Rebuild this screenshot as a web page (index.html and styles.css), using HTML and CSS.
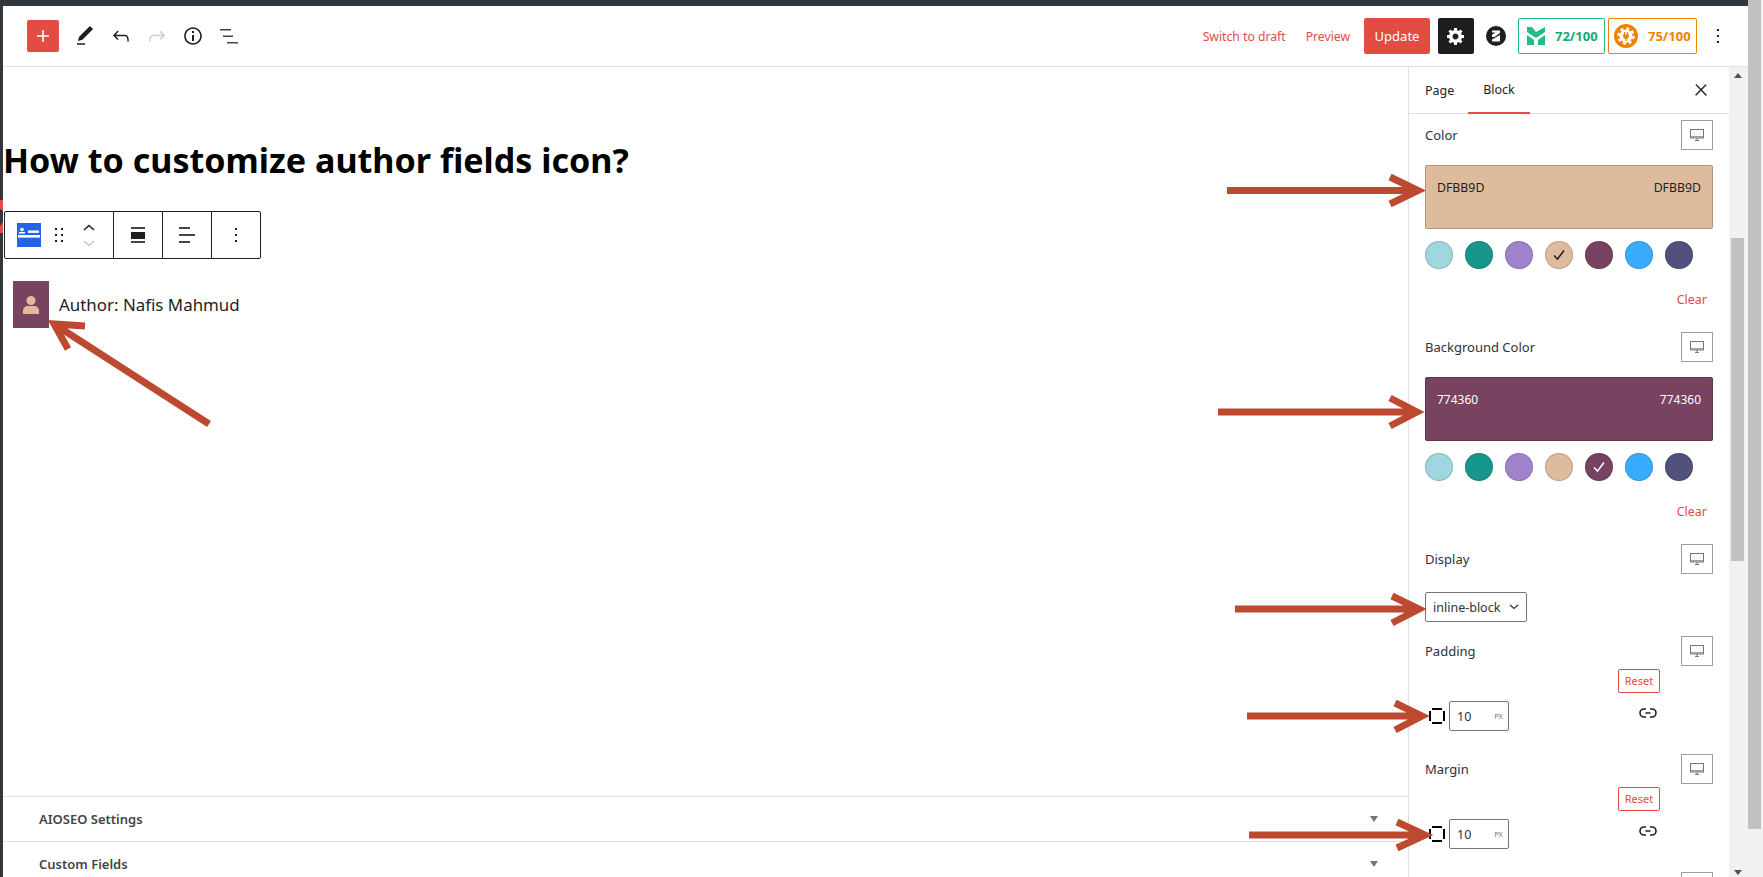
FILE: index.html
```html
<!DOCTYPE html>
<html lang="en-US">

<head>
    <meta charset="UTF-8">
    <meta name="viewport" content="width=device-width, initial-scale=1.0">
    <title>Edit Page</title>
    <link rel="stylesheet" href="styles.css">
</head>

<body>
    <div class="window">
        <!-- top bar -->
        <header class="topbar">
            <div class="tools">
                <button class="add-button">
                    <svg viewBox="0 0 24 24" width="24" height="24"><path d="M18 11.2h-5.2V6h-1.6v5.2H6v1.6h5.2V18h1.600v-5.200H18z" /></svg>
                </button>
                <span class="tool">
                    <svg viewBox="0 0 24 24" width="24" height="24"><path d="M20.1 5.1L16.9 2 6.2 12.7l-1.3 4.4 4.5-1.3L20.1 5.1zM4 20.8h8v-1.5H4v1.5z" /></svg>
                </span>
                <span class="tool">
                    <svg viewBox="0 0 24 24" width="24" height="24"><path d="M18.3 11.7c-.6-.6-1.4-.9-2.3-.9H6.7l2.9-3.3-1.1-1-4.5 5L8.5 16l1-1-2.7-2.7H16c.5 0 .9.2 1.3.5 1 1 1 3.4 1 4.5v.3h1.5v-.2c0-1.5 0-4.3-1.5-5.7z" /></svg>
                </span>
                <span class="tool tool-off">
                    <svg viewBox="0 0 24 24" width="24" height="24"><path d="M15.6 6.5l-1.1 1 2.9 3.3H8c-.9 0-1.7.3-2.3.9-1.4 1.5-1.4 4.2-1.4 5.6v.2h1.5v-.3c0-1.1 0-3.5 1-4.5.3-.3.7-.5 1.3-.5h9.2L14.5 15l1.1 1.1 4.6-4.6-4.6-5z" /></svg>
                </span>
                <span class="tool">
                    <svg viewBox="0 0 24 24" width="24" height="24"><path d="M12 3.2c-4.8 0-8.8 3.9-8.8 8.8 0 4.8 3.9 8.8 8.8 8.8 4.8 0 8.8-3.9 8.8-8.8 0-4.8-4-8.8-8.8-8.8zm0 16c-4 0-7.2-3.3-7.2-7.2C4.8 8 8 4.8 12 4.8s7.2 3.3 7.2 7.2c0 4-3.2 7.2-7.2 7.2zM11 17h2v-6h-2v6zm0-8h2V7h-2v2z" /></svg>
                </span>
                <span class="tool">
                    <svg viewBox="0 0 24 24" width="24" height="24"><path d="M3 5h11v1.5H3zM6 11.500h10v1.500H6zM10 18h11v1.500H10z" fill="#444" /></svg>
                </span>
            </div>
            <div class="actions">
                <a class="link-action">Switch to draft</a>
                <a class="link-action preview-link">Preview</a>
                <button class="update-button">Update</button>
                <button class="settings-button">
                    <svg viewBox="0 0 20 20" width="20" height="20"><path d="M18 12h-2.18c-.17.7-.44 1.35-.81 1.93l1.54 1.54-2.1 2.1-1.54-1.54c-.58.36-1.23.63-1.91.79V19H8v-2.18c-.68-.16-1.33-.43-1.91-.79l-1.54 1.54-2.12-2.12 1.54-1.54c-.36-.58-.63-1.23-.79-1.91H1V9.03h2.17c.16-.7.44-1.35.8-1.94L2.43 5.55l2.1-2.1 1.54 1.54c.58-.37 1.24-.64 1.93-.81V2h3v2.18c.68.16 1.33.43 1.91.79l1.54-1.54 2.12 2.12-1.54 1.54c.36.59.64 1.24.8 1.94H18V12zm-8.5 1.5c1.66 0 3-1.34 3-3s-1.34-3-3-3-3 1.34-3 3 1.34 3 3 3z" /></svg>
                </button>
                <span class="brand-logo">
                    <svg viewBox="0 0 20 20" width="20" height="20">
                        <circle cx="10" cy="10" r="10" fill="#1e1e1e" />
                        <path d="M6 4.500h8v2.500L8.500 11H6V8.800L9.500 6.500H6zM14 9v6.500H6v-2z" fill="#fff" />
                    </svg>
                </span>
                <div class="score score-green">
                    <svg viewBox="0 0 18 18" width="18" height="18">
                        <path d="M0 0h5l4 5 9-5v5l-9 6-9-6zM0 8l7 5v5H0zM18 8l-7 5v5h7z" fill="#22bd86" />
                    </svg>
                    <span>72/100</span>
                </div>
                <div class="score score-orange">
                    <svg viewBox="0 0 24 24" width="24" height="24">
                        <circle cx="12" cy="12" r="12" fill="#f18200" />
                        <circle cx="12" cy="12" r="6.500" fill="#fff" />
                        <circle cx="12" cy="12" r="7.500" fill="none" stroke="#fff" stroke-width="2.500" stroke-dasharray="3 2.890" />
                        <path d="M10 8h1.200v2.500h1.600V8H14v2.500h1v1.500a3 3 0 0 1-2.300 2.900V17h-1.400v-2.100A3 3 0 0 1 9 12v-1.500h1z" fill="#f18200" />
                    </svg>
                    <span>75/100</span>
                </div>
                <span class="more-icon">
                    <svg viewBox="0 0 24 24" width="24" height="24"><path d="M13 19h-2v-2h2v2zm0-6h-2v-2h2v2zm0-6h-2V5h2v2z" /></svg>
                </span>
            </div>
        </header>

        <div class="main">
            <!-- editor side -->
            <section class="editor">
                <h1 class="page-title">How to customize author fields icon?</h1>

                <div class="block-toolbar">
                    <div class="toolbar-group group-first">
                        <svg class="block-icon" viewBox="0 0 24 24" width="24" height="24">
                            <rect width="24" height="24" fill="#2563eb" />
                            <circle cx="5" cy="6.500" r="1.800" fill="#fff" />
                            <rect x="2" y="9" width="6" height="1.600" fill="#fff" />
                            <rect x="11" y="7.500" width="11" height="2.400" fill="#fff" />
                            <rect x="1" y="12" width="22" height="2.600" fill="#fff" />
                        </svg>
                        <svg class="drag-icon" viewBox="0 0 8 14" width="8" height="14">
                            <path d="M0 0h2v2H0zM6 0h2v2H6zM0 6h2v2H0zM6 6h2v2H6zM0 12h2v2H0zM6 12h2v2H6z" />
                        </svg>
                        <div class="mover">
                            <svg viewBox="0 0 12 7" width="12" height="7"><path d="M1 6l5-4.500L11 6" fill="none" stroke="#1e1e1e" stroke-width="1.500" /></svg>
                            <svg viewBox="0 0 12 7" width="12" height="7"><path d="M1 1l5 4.500L11 1" fill="none" stroke="#c4c4c4" stroke-width="1.500" /></svg>
                        </div>
                    </div>
                    <div class="toolbar-group">
                        <svg viewBox="0 0 24 24" width="24" height="24"><path d="M5 4h14v2H5zM5 18h14v2H5z" fill="#444" /><path d="M5 9h14v7H5z" /></svg>
                    </div>
                    <div class="toolbar-group">
                        <svg viewBox="0 0 24 24" width="24" height="24"><path d="M4 4h11v2H4zM4 11h16v2H4zM4 18h11v2H4z" fill="#444" /></svg>
                    </div>
                    <div class="toolbar-group">
                        <svg viewBox="0 0 24 24" width="24" height="24"><path d="M13 19h-2v-2h2v2zm0-6h-2v-2h2v2zm0-6h-2V5h2v2z" /></svg>
                    </div>
                </div>

                <div class="author-row">
                    <span class="author-icon">
                        <svg viewBox="0 0 16 18" width="16" height="18">
                            <circle cx="8" cy="4.500" r="4.500" fill="#dfbb9d" />
                            <path d="M0 18v-3c0-3 2-5 5-5h6c3 0 5 2 5 5v3z" fill="#dfbb9d" />
                        </svg>
                    </span>
                    <span class="author-text">Author: Nafis Mahmud</span>
                </div>

                <div class="meta-boxes">
                    <div class="meta-box"><span>AIOSEO Settings</span><i class="meta-arrow"></i></div>
                    <div class="meta-box"><span>Custom Fields</span><i class="meta-arrow"></i></div>
                </div>
            </section>

            <!-- settings side -->
            <aside class="sidebar">
                <div class="sidebar-panel">
                    <div class="tabs">
                        <span class="tab">Page</span>
                        <span class="tab tab-active">Block</span>
                        <svg class="close-icon" viewBox="0 0 24 24" width="18" height="18"><path d="M13 11.800l6.100-6.300-1-1-6.100 6.200-6.100-6.300-1 1 6.100 6.300-6.500 6.700 1 1 6.500-6.600 6.500 6.700 1-1z" /></svg>
                    </div>

                    <div class="fields">
                        <div class="field field-color">
                            <div class="field-head">
                                <label>Color</label>
                                <button class="device-button"><svg viewBox="0 0 14 14" width="14" height="14"><rect x=".5" y="1.500" width="13" height="8.500" fill="#fafafa" stroke="#777" /><path d="M0 8.800h14M5 12.500h4M7 10v2.500" stroke="#777" /></svg></button>
                            </div>
                            <div class="color-box box-sand"><span>DFBB9D</span><span>DFBB9D</span></div>
                            <div class="swatches">
                                <span class="swatch sw-sky"></span>
                                <span class="swatch sw-teal"></span>
                                <span class="swatch sw-violet"></span>
                                <span class="swatch sw-sand">
                                    <svg viewBox="0 0 14 14" width="14" height="14"><path d="M2 7.500l3.500 3.500L12 2.500" fill="none" stroke="#1e1e1e" stroke-width="1.500" /></svg>
                                </span>
                                <span class="swatch sw-plum"></span>
                                <span class="swatch sw-blue"></span>
                                <span class="swatch sw-navy"></span>
                            </div>
                            <div class="clear-row"><a>Clear</a></div>
                        </div>

                        <div class="field field-color">
                            <div class="field-head">
                                <label>Background Color</label>
                                <button class="device-button"><svg viewBox="0 0 14 14" width="14" height="14"><rect x=".5" y="1.500" width="13" height="8.500" fill="#fafafa" stroke="#777" /><path d="M0 8.800h14M5 12.500h4M7 10v2.500" stroke="#777" /></svg></button>
                            </div>
                            <div class="color-box box-plum"><span>774360</span><span>774360</span></div>
                            <div class="swatches">
                                <span class="swatch sw-sky"></span>
                                <span class="swatch sw-teal"></span>
                                <span class="swatch sw-violet"></span>
                                <span class="swatch sw-sand"></span>
                                <span class="swatch sw-plum">
                                    <svg viewBox="0 0 14 14" width="14" height="14"><path d="M2 7.500l3.500 3.500L12 2.500" fill="none" stroke="#fff" stroke-width="1.500" /></svg>
                                </span>
                                <span class="swatch sw-blue"></span>
                                <span class="swatch sw-navy"></span>
                            </div>
                            <div class="clear-row"><a>Clear</a></div>
                        </div>

                        <div class="field field-display">
                            <div class="field-head">
                                <label>Display</label>
                                <button class="device-button"><svg viewBox="0 0 14 14" width="14" height="14"><rect x=".5" y="1.500" width="13" height="8.500" fill="#fafafa" stroke="#777" /><path d="M0 8.800h14M5 12.500h4M7 10v2.500" stroke="#777" /></svg></button>
                            </div>
                            <div class="select-box">
                                <span>inline-block</span>
                                <svg viewBox="0 0 10 6" width="10" height="6"><path d="M1 1l4 3.500L9 1" fill="none" stroke="#333" stroke-width="1.300" /></svg>
                            </div>
                        </div>

                        <div class="field field-space">
                            <div class="field-head">
                                <label>Padding</label>
                                <button class="device-button"><svg viewBox="0 0 14 14" width="14" height="14"><rect x=".5" y="1.500" width="13" height="8.500" fill="#fafafa" stroke="#777" /><path d="M0 8.800h14M5 12.500h4M7 10v2.500" stroke="#777" /></svg></button>
                            </div>
                            <div class="reset-row"><button class="reset-button">Reset</button></div>
                            <div class="space-row">
                                <svg class="side-icon" viewBox="0 0 16 16" width="16" height="16"><path d="M3 0h10v2H3zM3 14h10v2H3zM0 3h2v10H0zM14 3h2v10h-2z" /></svg>
                                <div class="num-input"><span>10</span><small>PX</small></div>
                                <svg class="link-icon" viewBox="0 0 18 10" width="18" height="10"><path d="M7 1H5a4 4 0 0 0 0 8h2M11 1h2a4 4 0 0 1 0 8h-2M6.500 5h5" fill="none" stroke="#1e1e1e" stroke-width="1.600" /></svg>
                            </div>
                        </div>

                        <div class="field field-space">
                            <div class="field-head">
                                <label>Margin</label>
                                <button class="device-button"><svg viewBox="0 0 14 14" width="14" height="14"><rect x=".5" y="1.500" width="13" height="8.500" fill="#fafafa" stroke="#777" /><path d="M0 8.800h14M5 12.500h4M7 10v2.500" stroke="#777" /></svg></button>
                            </div>
                            <div class="reset-row"><button class="reset-button">Reset</button></div>
                            <div class="space-row">
                                <svg class="side-icon" viewBox="0 0 16 16" width="16" height="16"><path d="M3 0h10v2H3zM3 14h10v2H3zM0 3h2v10H0zM14 3h2v10h-2z" /></svg>
                                <div class="num-input"><span>10</span><small>PX</small></div>
                                <svg class="link-icon" viewBox="0 0 18 10" width="18" height="10"><path d="M7 1H5a4 4 0 0 0 0 8h2M11 1h2a4 4 0 0 1 0 8h-2M6.500 5h5" fill="none" stroke="#1e1e1e" stroke-width="1.600" /></svg>
                            </div>
                        </div>

                        <div class="field">
                            <div class="field-head">
                                <label></label>
                                <button class="device-button"></button>
                            </div>
                        </div>
                    </div>
                </div>

                <div class="panel-scroll">
                    <i class="arrow-up"></i>
                    <div class="panel-thumb"></div>
                    <i class="arrow-down"></i>
                </div>
            </aside>
        </div>
    </div>

    <div class="page-scroll">
        <div class="page-thumb"></div>
    </div>

    <!-- hand drawn arrows on top of the screenshot -->
    <svg class="marks" viewBox="0 0 1763 877" width="1763" height="877">
        <g fill="none" stroke="#bd4a30" stroke-width="7">
            <path d="M1227 190.500H1418M1390 177L1418 190.500L1390 204" />
            <path d="M1218 412H1417M1390 398L1417 412L1390 426" />
            <path d="M1235 609H1419M1392 596L1419 609L1392 623" />
            <path d="M1247 716H1422M1395 703L1422 716L1395 730" />
            <path d="M1249 835H1425M1397 822L1425 835L1397 848" />
            <path d="M209 424L54 324M85 326L54 324L68 349" />
        </g>
        <path d="M0 200H3V211L0 209zM0 226L3 222V233H0z" fill="#e24c43" />
    </svg>
</body>

</html>
```

FILE: styles.css
```css
* {
    box-sizing: border-box;
}

body {
    font-family: "Noto Sans", sans-serif;
    font-size: 13px;
    margin: 0;
    padding: 0;
    height: 877px;
    overflow: hidden;
    display: flex;
    background-color: #f1f1f1;
    color: #1e1e1e;
}

button {
    font-family: inherit;
    border: none;
    padding: 0;
    background: none;
}

.window {
    width: 1748px;
    height: 877px;
    display: flex;
    flex-direction: column;
    border-top: 6px solid #32373c;
    border-left: 3px solid #32373c;
    background-color: #fff;
}

/* TOP BAR */

.topbar {
    height: 61px;
    flex-shrink: 0;
    display: flex;
    align-items: center;
    justify-content: space-between;
    border-bottom: 1px solid #e0e0e0;
}

.tools {
    display: flex;
    align-items: center;
    padding-left: 24px;
}

.add-button {
    width: 32px;
    height: 32px;
    margin-right: 8px;
    border-radius: 2px;
    background-color: #e24c43;
    display: flex;
    align-items: center;
    justify-content: center;
    fill: #fff;
}

.tool {
    width: 36px;
    height: 32px;
    display: flex;
    align-items: center;
    justify-content: center;
    fill: #1e1e1e;
}

.tool-off {
    fill: #cfcfcf;
}

.actions {
    display: flex;
    align-items: center;
    padding-right: 18px;
}

.link-action {
    color: #e24c43;
    font-size: 12.200px;
    margin-right: 20px;
}

.preview-link {
    margin-right: 14px;
}

.update-button {
    width: 66px;
    height: 36px;
    border-radius: 2px;
    background-color: #e24c43;
    color: #fff;
    font-size: 13px;
    margin-right: 8px;
}

.settings-button {
    width: 36px;
    height: 36px;
    border-radius: 2px;
    background-color: #1e1e1e;
    fill: #fff;
    display: flex;
    align-items: center;
    justify-content: center;
    margin-right: 12px;
}

.brand-logo {
    display: flex;
    margin-right: 12px;
}

.score {
    height: 36px;
    display: flex;
    align-items: center;
    gap: 10px;
    border: 1px solid;
    border-radius: 2px;
    font-size: 13px;
    font-weight: 700;
}

.score-green {
    width: 87px;
    padding-left: 8px;
    border-color: #22bd86;
    color: #18a877;
    margin-right: 3px;
}

.score-orange {
    width: 89px;
    padding-left: 5px;
    border-color: #f18200;
    color: #f18200;
    margin-right: 9px;
}

.more-icon {
    display: flex;
    fill: #1e1e1e;
}

/* EDITOR */

.main {
    flex: 1;
    min-height: 0;
    display: flex;
    overflow: hidden;
}

.editor {
    flex: 1;
    min-width: 0;
    display: flex;
    flex-direction: column;
}

.page-title {
    margin: 0;
    padding: 71px 0 0;
    height: 144px;
    flex-shrink: 0;
    font-size: 34.100px;
    line-height: 44px;
    font-weight: 700;
    color: #000;
}

.block-toolbar {
    width: 257px;
    height: 48px;
    margin-left: 1px;
    flex-shrink: 0;
    display: flex;
    border: 1px solid #1e1e1e;
    border-radius: 2px;
    background-color: #fff;
}

.toolbar-group {
    width: 49px;
    display: flex;
    align-items: center;
    justify-content: center;
    border-left: 1px solid #1e1e1e;
    fill: #1e1e1e;
}

.group-first {
    width: 108px;
    border-left: none;
    justify-content: flex-start;
    padding-left: 12px;
}

.drag-icon {
    margin-left: 14px;
}

.mover {
    display: flex;
    flex-direction: column;
    gap: 9px;
    margin-left: 20px;
}

.mover svg {
    display: block;
}

.author-row {
    margin: 22px 0 0 10px;
    display: flex;
    align-items: center;
    gap: 10px;
    flex-shrink: 0;
}

.author-icon {
    width: 36px;
    height: 47px;
    background-color: #774360;
    display: flex;
    align-items: center;
    justify-content: center;
}

.author-text {
    font-size: 16.900px;
    color: #1e1e1e;
}

.meta-boxes {
    margin-top: 468px;
    flex-shrink: 0;
}

.meta-box {
    height: 45px;
    border-top: 1px solid #e0e0e0;
    display: flex;
    align-items: center;
    justify-content: space-between;
    padding: 0 30px 0 36px;
    font-weight: 600;
    color: #444;
}

.meta-arrow {
    width: 0;
    height: 0;
    border-left: 4px solid transparent;
    border-right: 4px solid transparent;
    border-top: 6px solid #757575;
}

/* SIDEBAR */

.sidebar {
    width: 340px;
    flex-shrink: 0;
    display: flex;
    border-left: 1px solid #e0e0e0;
}

.sidebar-panel {
    flex: 1;
    min-width: 0;
    background-color: #fff;
}

.tabs {
    height: 47px;
    display: flex;
    align-items: stretch;
    border-bottom: 1px solid #e0e0e0;
    padding-left: 16px;
}

.tab {
    display: flex;
    align-items: center;
    color: #1e1e1e;
    font-size: 12.500px;
    width: 43px;
}

.tab-active {
    width: 62px;
    justify-content: center;
    margin-bottom: -1px;
    border-bottom: 2px solid #e24c43;
}

.close-icon {
    margin: 14px 0 0 162px;
    fill: #1e1e1e;
    stroke: #1e1e1e;
    stroke-width: .6;
}

.fields {
    padding: 6px 16px 0;
}

.field-head {
    height: 30px;
    display: flex;
    align-items: center;
    justify-content: space-between;
    color: #2c3338;
}

.device-button {
    width: 32px;
    height: 30px;
    border: 1px solid #9a9da6;
    display: flex;
    align-items: center;
    justify-content: center;
}

.field-color {
    height: 212px;
}

.color-box {
    height: 64px;
    margin-top: 15px;
    padding: 13px 11px;
    display: flex;
    justify-content: space-between;
    line-height: 18px;
    border: 1px solid rgba(0, 0, 0, 0.2);
    border-radius: 2px;
    font-size: 12.300px;
}

.box-sand {
    background-color: #dfbb9d;
    color: #1e1e1e;
}

.box-plum {
    background-color: #774360;
    color: #fff;
    font-size: 12px;
}

.swatches {
    display: flex;
    gap: 12px;
    margin-top: 12px;
}

.swatch {
    width: 28px;
    height: 28px;
    border-radius: 50%;
    border: 1px solid rgba(0, 0, 0, 0.15);
    display: flex;
    align-items: center;
    justify-content: center;
}

.sw-sky {
    background-color: #9fd6e0;
}

.sw-teal {
    background-color: #17978b;
}

.sw-violet {
    background-color: #a083cc;
}

.sw-sand {
    background-color: #dfbb9d;
}

.sw-plum {
    background-color: #774360;
}

.sw-blue {
    background-color: #38acff;
}

.sw-navy {
    background-color: #50517c;
}

.clear-row {
    margin-top: 21px;
    padding-right: 6px;
    text-align: right;
    color: #e24c43;
    font-size: 12.500px;
    line-height: 20px;
}

.field-display {
    height: 92px;
}

.select-box {
    width: 102px;
    height: 30px;
    margin-top: 18px;
    padding: 0 7px;
    display: flex;
    align-items: center;
    justify-content: space-between;
    border: 1px solid #757575;
    border-radius: 2px;
    color: #2c3338;
    font-size: 12.500px;
}

.field-space {
    height: 118px;
}

.reset-row {
    display: flex;
    justify-content: flex-end;
    padding-right: 53px;
    margin-top: 3px;
}

.reset-button {
    width: 42px;
    height: 24px;
    border: 1px solid #e24c43;
    border-radius: 2px;
    color: #e24c43;
    font-size: 11px;
    padding-bottom: 2px;
}

.space-row {
    display: flex;
    align-items: center;
    margin: 8px 0 0 4px;
}

.num-input {
    width: 60px;
    height: 30px;
    margin-left: 4px;
    padding: 0 5px 0 7px;
    display: flex;
    align-items: center;
    justify-content: space-between;
    border: 1px solid #757575;
    border-radius: 2px;
    color: #2c3338;
    font-size: 12.500px;
}

.num-input small {
    font-size: 7.500px;
    color: #777;
}

.link-icon {
    margin: -6px 0 0 130px;
}

/* SCROLLBARS */

.panel-scroll {
    width: 19px;
    flex-shrink: 0;
    background-color: #f1f1f1;
    position: relative;
    padding: 171px 4px 0 2px;
}

.panel-thumb {
    height: 323px;
    background-color: #c1c1c1;
}

.arrow-up,
.arrow-down {
    position: absolute;
    left: 5px;
    width: 0;
    height: 0;
    border-left: 4px solid transparent;
    border-right: 4px solid transparent;
}

.arrow-up {
    top: 6px;
    border-bottom: 5px solid #505050;
}

.arrow-down {
    bottom: 2px;
    border-top: 5px solid #505050;
}

.page-scroll {
    width: 15px;
    padding-right: 2px;
}

.page-thumb {
    height: 829px;
    background-color: #c1c1c1;
}

.marks {
    position: absolute;
    left: 0;
    top: 0;
    pointer-events: none;
}
```
